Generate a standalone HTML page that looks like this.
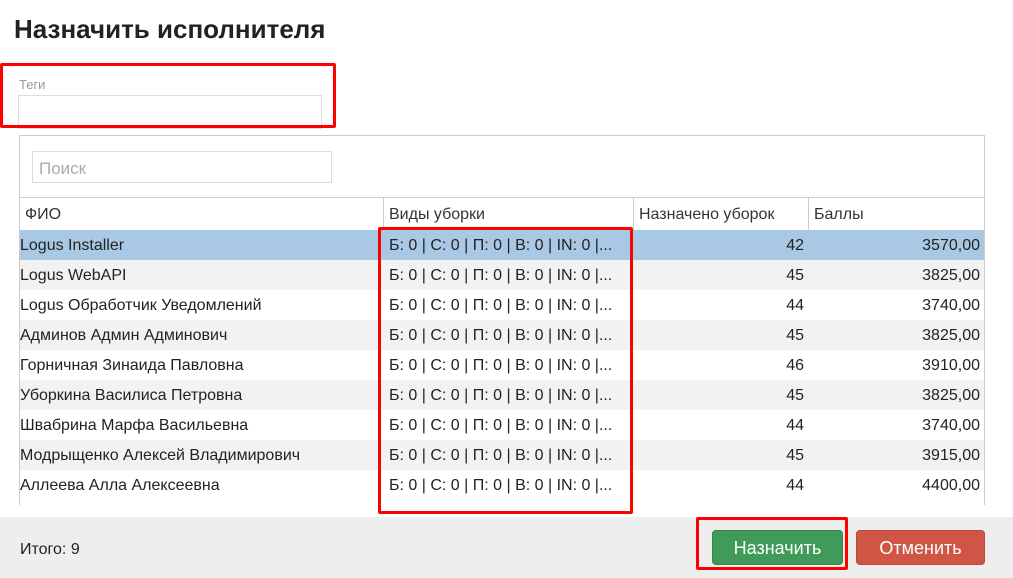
<!DOCTYPE html>
<html><head><meta charset="utf-8"><style>
*{margin:0;padding:0;box-sizing:border-box}
body{width:1013px;height:578px;background:#fff;font-family:"Liberation Sans","DejaVu Sans",sans-serif;position:relative;overflow:hidden;color:#222}
.abs{position:absolute}
h1{position:absolute;left:14px;top:14px;font-size:26px;font-weight:bold;color:#222}
.red{position:absolute;border:3px solid #f00;border-radius:2px}
.row{position:absolute;left:20px;width:964px;height:30px;font-size:16px;line-height:32px}
.row span{position:absolute;top:0;white-space:nowrap}
.c1{left:0}.c2{left:369px}.c3{right:180px}.c4{right:4px}
</style></head><body>
<h1>Назначить исполнителя</h1>
<div class="abs" style="left:19px;top:77px;font-size:13px;color:#999">Теги</div>
<div class="abs" style="left:18px;top:95px;width:304px;height:34px;border:1px solid #ddd"></div>
<div class="abs" style="left:19px;top:135px;width:966px;height:370px;border:1px solid #ccc;border-bottom:none"></div>
<div class="abs" style="left:32px;top:151px;width:300px;height:32px;border:1px solid #ddd;font-size:17px;color:#aaa;line-height:34px;padding-left:6px">Поиск</div>
<div class="abs" style="left:20px;top:197px;width:964px;height:1px;background:#ccc"></div>
<div class="abs" style="left:383px;top:198px;width:1px;height:32px;background:#ccc"></div>
<div class="abs" style="left:633px;top:198px;width:1px;height:32px;background:#ccc"></div>
<div class="abs" style="left:808px;top:198px;width:1px;height:32px;background:#ccc"></div>
<div class="row" style="top:199px;color:#333"><span class="c1" style="left:5px">ФИО</span><span style="left:369px">Виды уборки</span><span style="left:619px">Назначено уборок</span><span style="left:794px">Баллы</span></div>
<div class="row" style="top:230px;background:#a9c8e4"><span class="c1">Logus Installer</span><span class="c2">Б: 0 | С: 0 | П: 0 | В: 0 | IN: 0 |...</span><span class="c3">42</span><span class="c4">3570,00</span></div>
<div class="row" style="top:260px;background:#f2f2f2"><span class="c1">Logus WebAPI</span><span class="c2">Б: 0 | С: 0 | П: 0 | В: 0 | IN: 0 |...</span><span class="c3">45</span><span class="c4">3825,00</span></div>
<div class="row" style="top:290px"><span class="c1">Logus Обработчик Уведомлений</span><span class="c2">Б: 0 | С: 0 | П: 0 | В: 0 | IN: 0 |...</span><span class="c3">44</span><span class="c4">3740,00</span></div>
<div class="row" style="top:320px;background:#f2f2f2"><span class="c1">Админов Админ Админович</span><span class="c2">Б: 0 | С: 0 | П: 0 | В: 0 | IN: 0 |...</span><span class="c3">45</span><span class="c4">3825,00</span></div>
<div class="row" style="top:350px"><span class="c1">Горничная Зинаида Павловна</span><span class="c2">Б: 0 | С: 0 | П: 0 | В: 0 | IN: 0 |...</span><span class="c3">46</span><span class="c4">3910,00</span></div>
<div class="row" style="top:380px;background:#f2f2f2"><span class="c1">Уборкина Василиса Петровна</span><span class="c2">Б: 0 | С: 0 | П: 0 | В: 0 | IN: 0 |...</span><span class="c3">45</span><span class="c4">3825,00</span></div>
<div class="row" style="top:410px"><span class="c1">Швабрина Марфа Васильевна</span><span class="c2">Б: 0 | С: 0 | П: 0 | В: 0 | IN: 0 |...</span><span class="c3">44</span><span class="c4">3740,00</span></div>
<div class="row" style="top:440px;background:#f2f2f2"><span class="c1">Модрыщенко Алексей Владимирович</span><span class="c2">Б: 0 | С: 0 | П: 0 | В: 0 | IN: 0 |...</span><span class="c3">45</span><span class="c4">3915,00</span></div>
<div class="row" style="top:470px"><span class="c1">Аллеева Алла Алексеевна</span><span class="c2">Б: 0 | С: 0 | П: 0 | В: 0 | IN: 0 |...</span><span class="c3">44</span><span class="c4">4400,00</span></div>
<div class="abs" style="left:0;top:517px;width:1013px;height:61px;background:#eee"></div>
<div class="abs" style="left:20px;top:541px;font-size:16px">Итого: 9</div>
<div class="abs" style="left:712px;top:530px;width:131px;height:35px;background:#3f9b57;border:1px solid #348548;border-radius:4px;color:#fff;font-size:18px;text-align:center;line-height:35px">Назначить</div>
<div class="abs" style="left:856px;top:530px;width:129px;height:35px;background:#cf5545;border:1px solid #b94a3c;border-radius:4px;color:#fff;font-size:18px;text-align:center;line-height:35px">Отменить</div>
<div class="red" style="left:0;top:63px;width:336px;height:65px"></div>
<div class="red" style="left:378px;top:227px;width:255px;height:287px"></div>
<div class="red" style="left:696px;top:517px;width:152px;height:53px"></div>
</body></html>
